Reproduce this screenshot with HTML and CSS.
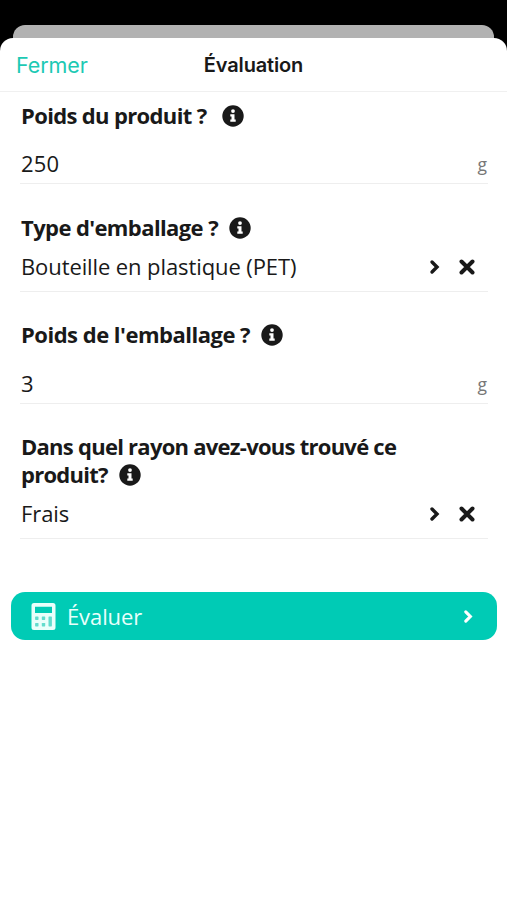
FILE: index.html
```html
<!DOCTYPE html>
<html lang="fr">
<head>
<meta charset="utf-8">
<title>Évaluation</title>
<link rel="stylesheet" href="styles.css">
</head>
<body>
<svg width="0" height="0" class="defs">
  <symbol id="info" viewBox="0 0 22 22"><circle cx="11" cy="11" r="10.7" fill="#191919"/><circle cx="11" cy="6.1" r="1.9" fill="#fff"/><path d="M8.3 9.2h4.2v5.3h1.2v2.2H8.3v-2.2h1.2v-3.1H8.3z" fill="#fff"/></symbol>
  <symbol id="chevron" viewBox="0 0 12 16"><path d="M3 3l5 5-5 5" fill="none" stroke="currentColor" stroke-width="3.4" stroke-linecap="round" stroke-linejoin="miter"/></symbol>
  <symbol id="cross" viewBox="0 0 16 16"><path d="M2.5 2.5l11 11M13.5 2.5l-11 11" fill="none" stroke="currentColor" stroke-width="4" stroke-linecap="round"/></symbol>
</svg>
<div class="behind"></div>
<main class="sheet">
  <header class="bar">
    <span class="close">Fermer</span>
    <h1 class="title">Évaluation</h1>
  </header>
  <section class="field weight first">
    <h2 class="label"><span class="l1">Poids du produit ?</span><svg class="info"><use href="#info"/></svg></h2>
    <div class="row"><span class="value digits">250</span><span class="unit">g</span></div>
  </section>
  <section class="field choice">
    <h2 class="label"><span class="l2">Type d'emballage ?</span><svg class="info"><use href="#info"/></svg></h2>
    <div class="row"><span class="value">Bouteille en plastique (PET)</span><svg class="chevron"><use href="#chevron"/></svg><svg class="cross"><use href="#cross"/></svg></div>
  </section>
  <section class="field weight second">
    <h2 class="label"><span class="l3">Poids de l'emballage ?</span><svg class="info"><use href="#info"/></svg></h2>
    <div class="row"><span class="value">3</span><span class="unit">g</span></div>
  </section>
  <section class="field choice last">
    <h2 class="label"><span class="l4">Dans quel rayon avez-vous trouvé ce<br>produit?</span><svg class="info"><use href="#info"/></svg></h2>
    <div class="row"><span class="value">Frais</span><svg class="chevron"><use href="#chevron"/></svg><svg class="cross"><use href="#cross"/></svg></div>
  </section>
  <button class="submit">
    <svg class="calc" viewBox="0 0 24 27"><path fill="#e9fffb" fill-rule="evenodd" d="M2.500 0h19A2.500 2.500 0 0 1 24 2.500v22a2.500 2.500 0 0 1-2.500 2.500h-19A2.500 2.500 0 0 1 0 24.500v-22A2.500 2.500 0 0 1 2.500 0zM3.500 3.800v6.200h17V3.800z"/><g fill="#62dccd"><rect x="3.600" y="13.500" width="3.400" height="3.400" rx=".6"/><rect x="10.300" y="13.500" width="3.400" height="3.400" rx=".6"/><rect x="3.600" y="20" width="3.400" height="3.400" rx=".6"/><rect x="10.300" y="20" width="3.400" height="3.400" rx=".6"/><rect x="17" y="13.500" width="3.400" height="9.900" rx=".6"/></g></svg>
    <span class="action">Évaluer</span>
    <svg class="chevron"><use href="#chevron"/></svg>
  </button>
</main>
</body>
</html>
```
FILE: styles.css
```css
* { box-sizing: border-box; }
body {
  margin: 0;
  height: 900px;
  padding-top: 25px;
  overflow: hidden;
  background: #000;
  color: #191919;
  font-family: "Open Sans", sans-serif;
  font-stretch: 92%;
}
.defs { display: block; }
.behind {
  height: 13px;
  margin: 0 13px;
  border-radius: 12px 12px 0 0;
  background: #b2b2b2;
}
.sheet {
  height: 862px;
  border-radius: 13px 13px 0 0;
  background: #fff;
}
.bar {
  display: grid;
  grid-template-columns: 1fr auto 1fr;
  align-items: center;
  height: 54px;
  padding: 0 16px;
  border-bottom: 1px solid #f0f0f0;
  font-family: Inter, sans-serif;
}
.close { color: #1cc9b4; font-size: 21.5px; letter-spacing: -.1px; }
.title { margin: 0; font-size: 20px; font-weight: 600; letter-spacing: -0.15px; }
.field { margin: 0 19px 0 20px; padding-left: 1px; border-bottom: 1px solid #eee; }
.weight { height: 112px; padding-top: 29px; }
.first { height: 92px; padding-top: 9px; }
.second { padding-top: 28px; }
.choice { height: 108px; padding-top: 29px; }
.last { height: 135px; padding-top: 28px; }
.label {
  margin: 0;
  font-size: 22px;
  font-weight: 700;
  line-height: 28px;
  white-space: nowrap;
}
.label .info { width: 22px; height: 22px; margin-left: 11px; vertical-align: -3px; }
.l1 { letter-spacing: -.65px; }
.l1 + .info { margin-left: 15px; }
.l2 { letter-spacing: -.6px; }
.l3 { letter-spacing: -.5px; }
.l4 { letter-spacing: -.74px; }
.row { display: flex; align-items: center; height: 32px; padding-right: 13px; margin-top: 10px; }
.weight .row { margin-top: 19px; padding-right: 1px; }
.second .row { margin-top: 20px; }
.last .row { margin-top: 10px; }
.value { flex: 1; font-size: 22px; line-height: 30px; padding-bottom: 2px; letter-spacing: -.1px; white-space: nowrap; }
.digits { letter-spacing: .2px; }
.unit { font-size: 17.5px; color: #777; }
.chevron { width: 12px; height: 16px; }
.cross { width: 16px; height: 16px; margin-left: 18px; }
.submit {
  display: flex;
  align-items: center;
  width: 486px;
  height: 48px;
  margin: 53px 0 0 11px;
  padding: 0 23px 0 20px;
  border: 0;
  border-radius: 14px;
  background: #00cbb5;
  color: #e9fffb;
  font: inherit;
}
.calc { width: 25px; height: 27px; margin-right: 11px; }
.action { flex: 1; font-size: 22px; letter-spacing: -.1px; text-align: left; }
.submit .chevron { width: 11px; height: 15px; color: #fff; }
```
